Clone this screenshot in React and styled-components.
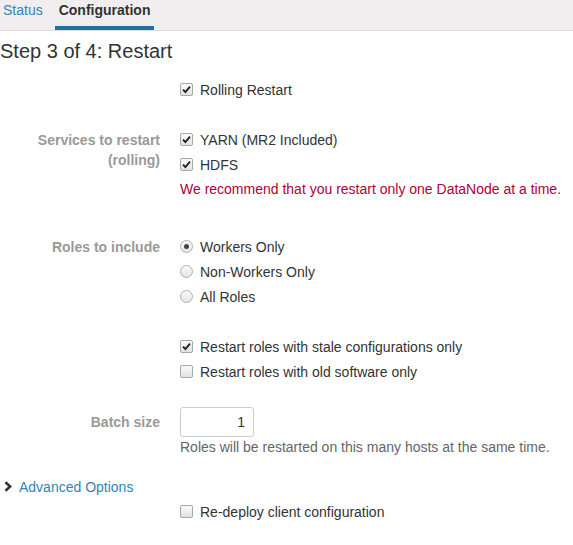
import styled, { createGlobalStyle } from 'styled-components';

const GlobalStyle = createGlobalStyle`
    body {
        margin: 0;
        background: #fff;
        font-family: "Liberation Sans", Arial, sans-serif;
        font-size: 14px;
        color: #333;
    }
`;

const Check = ({ checked }) => (
    <Box>
        {checked && (
            <svg width="9" height="9" viewBox="0 0 9 9">
                <path d="M1 4.6 L3.4 7 L8 1.6" fill="none" stroke="#222" strokeWidth="1.9" />
            </svg>
        )}
    </Box>
);

const Radio = ({ checked }) => (
    <Circle>{checked && <Dot />}</Circle>
);

const Option = ({ type = 'check', checked, children }) => (
    <Item>
        {type === 'radio' ? <Radio checked={checked} /> : <Check checked={checked} />}
        <span>{children}</span>
    </Item>
);

const App = () => {
    return (
        <Page>
            <GlobalStyle />
            <Tabs>
                <Tab>Status</Tab>
                <Tab $active>Configuration</Tab>
            </Tabs>
            <Heading>Step 3 of 4: Restart</Heading>

            <Row $top={14}>
                <Label />
                <Controls>
                    <Option checked>Rolling Restart</Option>
                </Controls>
            </Row>

            <Row $top={25}>
                <Label>Services to restart (rolling)</Label>
                <Controls>
                    <Option checked>YARN (MR2 Included)</Option>
                    <Option checked>HDFS</Option>
                    <Warning>We recommend that you restart only one DataNode at a time.</Warning>
                </Controls>
            </Row>

            <Row $top={32}>
                <Label>Roles to include</Label>
                <Controls>
                    <Option type="radio" checked>Workers Only</Option>
                    <Option type="radio">Non-Workers Only</Option>
                    <Option type="radio">All Roles</Option>
                </Controls>
            </Row>

            <Row $top={25}>
                <Label />
                <Controls>
                    <Option checked>Restart roles with stale configurations only</Option>
                    <Option>Restart roles with old software only</Option>
                </Controls>
            </Row>

            <Row $top={23}>
                <Label $center>Batch size</Label>
                <Controls>
                    <NumberInput readOnly defaultValue="1" />
                    <Help>Roles will be restarted on this many hosts at the same time.</Help>
                </Controls>
            </Row>

            <Advanced>
                <svg width="8" height="11" viewBox="0 0 8 11">
                    <path d="M1.5 1.2 L6.2 5.5 L1.5 9.8" fill="none" stroke="#333" strokeWidth="2.6" />
                </svg>
                <span>Advanced Options</span>
            </Advanced>

            <Row $top={0}>
                <Label />
                <Controls>
                    <Option>Re-deploy client configuration</Option>
                </Controls>
            </Row>
        </Page>
    );
}
export default App;

const Page = styled.div`
    width: 573px;
    min-height: 545px;
`;
const Tabs = styled.div`
    display: flex;
    gap: 8px;
    height: 30px;
    background: #f0eeee;
    border-bottom: 1px solid #dcdcdc;
`;
const Tab = styled.div`
    display: flex;
    align-items: flex-start;
    padding: 2px 4px 0;
    line-height: 17px;
    font-weight: ${p => (p.$active ? 'bold' : 'normal')};
    color: ${p => (p.$active ? '#333' : '#2f86b9')};
    border-bottom: 4px solid ${p => (p.$active ? '#1d7399' : 'transparent')};
    &:first-child {
        padding-left: 3px;
    }
`;
const Heading = styled.h1`
    margin: 8px 0 0;
    font-size: 20px;
    font-weight: normal;
    line-height: 24px;
    color: #333;
`;
const Row = styled.div`
    display: grid;
    grid-template-columns: 160px 1fr;
    column-gap: 20px;
    margin-top: ${p => p.$top}px;
`;
const Label = styled.div`
    text-align: right;
    font-weight: bold;
    color: #999;
    line-height: 20px;
    padding-top: ${p => (p.$center ? '5px' : '2.5px')};
`;
const Controls = styled.div`
    display: flex;
    flex-direction: column;
    align-items: flex-start;
`;
const Item = styled.div`
    display: flex;
    align-items: center;
    gap: 7px;
    height: 25px;
`;
const Box = styled.span`
    display: inline-flex;
    align-items: center;
    justify-content: center;
    width: 13px;
    height: 13px;
    box-sizing: border-box;
    border: 1px solid #a8a8a8;
    border-radius: 2px;
    background: linear-gradient(#fafafa, #e2e2e2);
`;
const Circle = styled.span`
    display: inline-flex;
    align-items: center;
    justify-content: center;
    width: 13px;
    height: 13px;
    box-sizing: border-box;
    border: 1px solid #b0b0b0;
    border-radius: 50%;
    background: linear-gradient(#fafafa, #e4e4e4);
`;
const Dot = styled.span`
    width: 5px;
    height: 5px;
    border-radius: 50%;
    background: #444;
`;
const Warning = styled.div`
    line-height: 25px;
    color: #b0003a;
`;
const NumberInput = styled.input`
    width: 74px;
    height: 30px;
    box-sizing: border-box;
    border: 1px solid #ccc;
    border-radius: 3px;
    padding: 0 8px 0 0;
    text-align: right;
    font-family: "Liberation Sans", Arial, sans-serif;
    font-size: 14px;
    color: #333;
    outline: none;
`;
const Help = styled.div`
    line-height: 20px;
    color: #666;
`;
const Advanced = styled.div`
    display: flex;
    align-items: center;
    gap: 7px;
    height: 25px;
    margin-top: 17px;
    padding-left: 4px;
    color: #2f86b9;
`;
